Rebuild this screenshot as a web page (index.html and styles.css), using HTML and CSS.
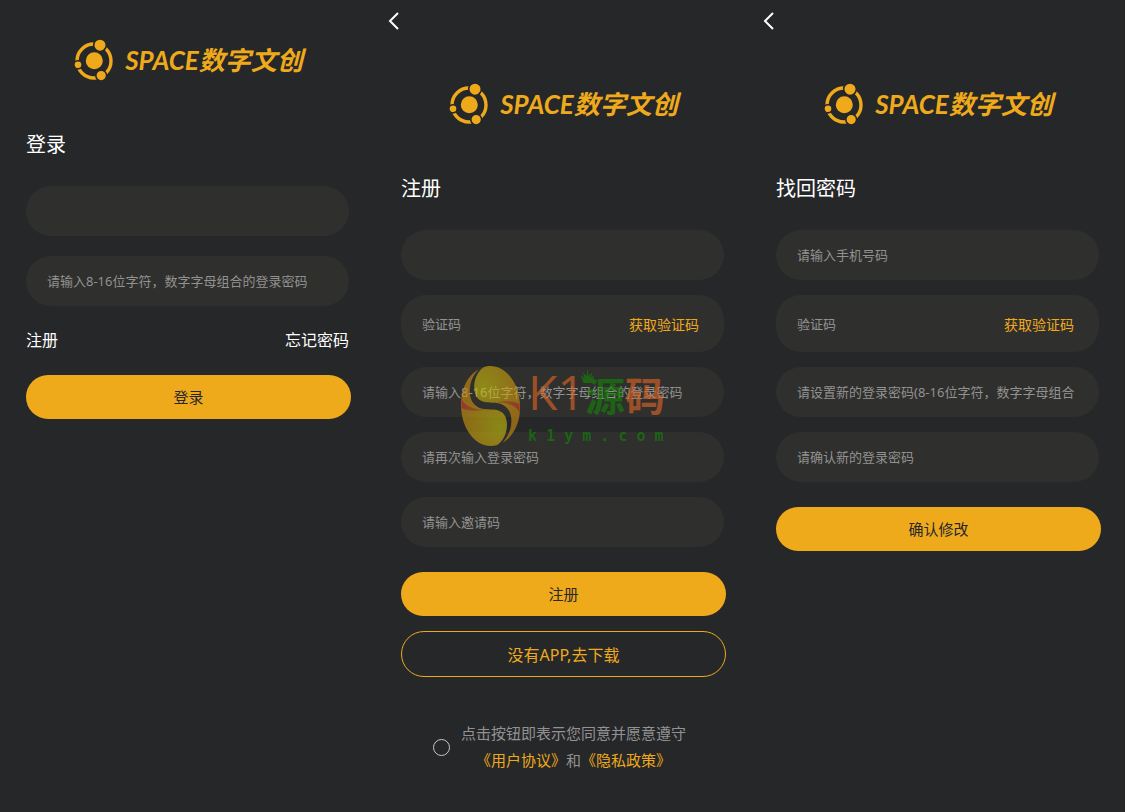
FILE: index.html
```html
<!DOCTYPE html>
<html lang="zh-CN">
<head>
<meta charset="utf-8">
<meta name="viewport" content="width=device-width, initial-scale=1">
<title>SPACE数字文创</title>
<link rel="stylesheet" href="styles.css">
</head>
<body>
<svg class="defs" aria-hidden="true">
  <symbol id="orbit" viewBox="0 0 40 42">
    <circle cx="20" cy="22" r="17" fill="none" stroke="#efaa1c" stroke-width="3.4"/>
    <g fill="#efaa1c" stroke="#262729" stroke-width="1.6">
      <circle cx="26" cy="6.2" r="6.3"/>
      <circle cx="27.2" cy="36.6" r="5.4"/>
      <circle cx="4" cy="25.8" r="4.1"/>
    </g>
    <circle cx="20.3" cy="21.7" r="8.5" fill="#efaa1c"/>
  </symbol>
  <symbol id="back" viewBox="0 0 12 18">
    <path d="M11 1 3 9l8 8" fill="none" stroke="#fff" stroke-width="2"/>
  </symbol>
</svg>
<main class="screens">
  <section class="screen">
    <div class="brand"><svg class="brand-mark" aria-hidden="true"><use href="#orbit"/></svg><span class="brand-name">SPACE数字文创</span></div>
    <h1 class="title">登录</h1>
    <form class="form form-login">
      <div class="field"><input class="input" type="text" aria-label="手机号码"></div>
      <div class="field"><input class="input" type="password" aria-label="登录密码" placeholder="请输入8-16位字符，数字字母组合的登录密码"></div>
      <div class="links"><a href="#register">注册</a><a href="#recover">忘记密码</a></div>
      <button class="btn" type="button">登录</button>
    </form>
  </section>

  <section class="screen" id="register">
    <nav class="nav"><button class="back" type="button" aria-label="返回"><svg class="back-icon" aria-hidden="true"><use href="#back"/></svg></button></nav>
    <div class="brand"><svg class="brand-mark" aria-hidden="true"><use href="#orbit"/></svg><span class="brand-name">SPACE数字文创</span></div>
    <h1 class="title">注册</h1>
    <form class="form">
      <div class="field"><input class="input" type="text" aria-label="手机号码"></div>
      <div class="field field-code"><input class="input" type="text" aria-label="验证码" placeholder="验证码"><button class="code" type="button">获取验证码</button></div>
      <div class="field"><input class="input" type="password" aria-label="登录密码" placeholder="请输入8-16位字符，数字字母组合的登录密码"></div>
      <div class="field"><input class="input" type="password" aria-label="再次输入登录密码" placeholder="请再次输入登录密码"></div>
      <div class="field"><input class="input" type="text" aria-label="邀请码" placeholder="请输入邀请码"></div>
      <button class="btn btn-submit" type="button">注册</button>
      <button class="btn btn-outline" type="button">没有APP,去下载</button>
      <div class="agree">
        <input class="agree-box" type="checkbox" id="agree">
        <div class="agree-text"><label for="agree">点击按钮即表示您同意并愿意遵守</label><br><a href="#terms">《用户协议》</a>和<a href="#privacy">《隐私政策》</a></div>
      </div>
    </form>
  </section>

  <section class="screen" id="recover">
    <nav class="nav"><button class="back" type="button" aria-label="返回"><svg class="back-icon" aria-hidden="true"><use href="#back"/></svg></button></nav>
    <div class="brand"><svg class="brand-mark" aria-hidden="true"><use href="#orbit"/></svg><span class="brand-name">SPACE数字文创</span></div>
    <h1 class="title">找回密码</h1>
    <form class="form">
      <div class="field"><input class="input" type="text" aria-label="手机号码" placeholder="请输入手机号码"></div>
      <div class="field field-code"><input class="input" type="text" aria-label="验证码" placeholder="验证码"><button class="code" type="button">获取验证码</button></div>
      <div class="field"><input class="input" type="password" aria-label="新的登录密码" placeholder="请设置新的登录密码(8-16位字符，数字字母组合)"></div>
      <div class="field"><input class="input" type="password" aria-label="确认新的登录密码" placeholder="请确认新的登录密码"></div>
      <button class="btn btn-submit" type="button">确认修改</button>
    </form>
  </section>

  <div class="watermark">
    <svg class="wm-mark" viewBox="21 18 177 240" aria-hidden="true">
      <defs>
        <radialGradient id="gold-top" gradientUnits="userSpaceOnUse" cx="85" cy="80" r="120"><stop offset="0" stop-color="#ccc80c"/><stop offset="1" stop-color="#d2900c"/></radialGradient>
        <radialGradient id="gold-low" gradientUnits="userSpaceOnUse" cx="140" cy="200" r="130"><stop offset="0" stop-color="#ccc80c"/><stop offset="1" stop-color="#d2900c"/></radialGradient>
        <linearGradient id="red-left" x1="0" x2="1"><stop offset="0" stop-color="#d8402e"/><stop offset="1" stop-color="#d8402e" stop-opacity=".5"/></linearGradient>
        <linearGradient id="red-right" x1="1" x2="0"><stop offset="0" stop-color="#d8402e"/><stop offset="1" stop-color="#d8402e" stop-opacity=".5"/></linearGradient>
      </defs>
      <path d="M74 28C35 50 20 95 21 138C22 205 62 258 110 258C121 258 128 256 133 253C161 231 167 181 147 160C135 148 115 149 95 148C65 145 47 125 47 95C47 65 58 45 74 28Z" fill="url(#gold-low)"/>
      <path d="M145 248C184 226 199 181 198 138C197 71 157 18 109 18C98 18 91 20 86 23C58 45 52 95 72 116C84 128 104 127 124 128C154 131 172 151 172 181C172 211 161 231 145 248Z" fill="url(#gold-top)"/>
      <path d="M22 118C35 140 60 150 95 148C70 155 40 153 23 144Z" fill="url(#red-left)"/>
      <path d="M197 158C184 136 159 126 124 128C149 121 179 123 196 132Z" fill="url(#red-right)"/>
    </svg>
    <div class="wm-text">
      <div class="wm-name"><span class="wm-latin">K1</span><span class="wm-green">源</span><span>码</span></div>
      <div class="wm-site">k 1 y m . c o m</div>
    </div>
    <svg class="wm-crown" viewBox="0 0 14 15" aria-hidden="true"><path d="M3 15 0 7l4 3-2-6 4 4 1-8 1 8 4-4-2 6 4-3-3 8Z" fill="#148506"/></svg>
  </div>
</main>
</body>
</html>
```

FILE: styles.css
```css
* {
  box-sizing: border-box;
}

body {
  margin: 0;
  background: #262729;
  color: #fff;
  font-family: "Noto Sans", "Noto Sans CJK SC", sans-serif;
  font-size: 16px;
}

button,
input {
  margin: 0;
  padding: 0;
  border: 0;
  background: none;
  color: inherit;
  font: inherit;
}

button {
  cursor: pointer;
}

a {
  color: inherit;
  text-decoration: none;
}

.defs {
  display: none;
}

.screens {
  position: relative;
  display: grid;
  grid-template-columns: repeat(auto-fit, minmax(320px, 1fr));
  min-height: 100vh;
}

.screen {
  padding: 0 24px 0 26px;
}

.nav {
  display: flex;
  align-items: flex-start;
  height: 44px;
  padding-top: 12px;
  margin-left: -14px;
}

.back {
  display: flex;
}

.back-icon {
  width: 12px;
  height: 18px;
}

.brand {
  display: flex;
  align-items: center;
  justify-content: center;
  gap: 11px;
  height: 120px;
}

.brand-mark {
  width: 40px;
  height: 42px;
}

.brand-name {
  color: #efaa1c;
  font-family: Lato, "Noto Sans CJK SC", sans-serif;
  font-size: 26px;
  font-style: italic;
  font-weight: 700;
  line-height: 32px;
  white-space: nowrap;
}

.title {
  margin: 0 0 16px;
  font-size: 20px;
  font-weight: 400;
  line-height: 50px;
}

.form {
  display: flex;
  flex-direction: column;
  gap: 15px;
}

.form-login {
  gap: 20px;
}

.field {
  display: flex;
  align-items: center;
  height: 50px;
  margin-right: 2px;
  padding: 0 25px 0 21px;
  border-radius: 25px;
  background: #2f2f2d;
}

.field-code {
  height: 57px;
}

.input {
  flex: 1;
  min-width: 0;
  height: 24px;
  outline: 0;
  font-size: 13px;
}

.input::placeholder {
  color: #929292;
  opacity: 1;
}

.code {
  color: #efaa1c;
  font-size: 14px;
}

.links {
  display: flex;
  justify-content: space-between;
  margin-right: 2px;
  line-height: 29px;
}

.btn {
  height: 44px;
  padding-bottom: 2px;
  border-radius: 23px;
  background: #efaa1c;
  color: #262729;
  font-size: 15px;
}

.btn-submit {
  margin-top: 10px;
}

.btn-outline {
  height: 46px;
  padding-bottom: 0;
  border: 1px solid #efaa1c;
  background: none;
  color: #efaa1c;
  font-size: 16px;
}

.agree {
  display: flex;
  align-items: center;
  gap: 11px;
  margin-top: 28px;
  padding-left: 32px;
}

.agree-box {
  flex: none;
  width: 17px;
  height: 17px;
  border: 1px solid #c8c8c8;
  border-radius: 50%;
  appearance: none;
}

.agree-box:checked {
  background: #efaa1c;
}

.agree-text {
  color: #929292;
  font-size: 15px;
  line-height: 27px;
  text-align: center;
}

.agree-text a {
  color: #efaa1c;
}

.watermark {
  position: absolute;
  top: 50%;
  left: 50%;
  display: flex;
  gap: 8px;
  opacity: 0.6;
  pointer-events: none;
  transform: translate(-50%, -50%);
}

.wm-mark {
  width: 60px;
  height: 80px;
}

.wm-text {
  display: flex;
  flex-direction: column;
  justify-content: space-between;
}

.wm-name {
  display: flex;
  align-items: center;
  height: 60px;
  color: #e36724;
  font-size: 40px;
  font-weight: 700;
  line-height: 60px;
}

.wm-latin {
  font-family: "Open Sans", sans-serif;
  font-size: 48px;
  font-weight: 400;
  line-height: 52px;
  padding-bottom: 8px;
}

.wm-green,
.wm-site {
  color: #148506;
}

.wm-site {
  font-family: "DejaVu Sans Mono", monospace;
  font-size: 15px;
  font-weight: 700;
  line-height: 20px;
  white-space: nowrap;
}

.wm-crown {
  position: absolute;
  top: 2px;
  left: 120px;
  width: 14px;
  height: 15px;
}
```
